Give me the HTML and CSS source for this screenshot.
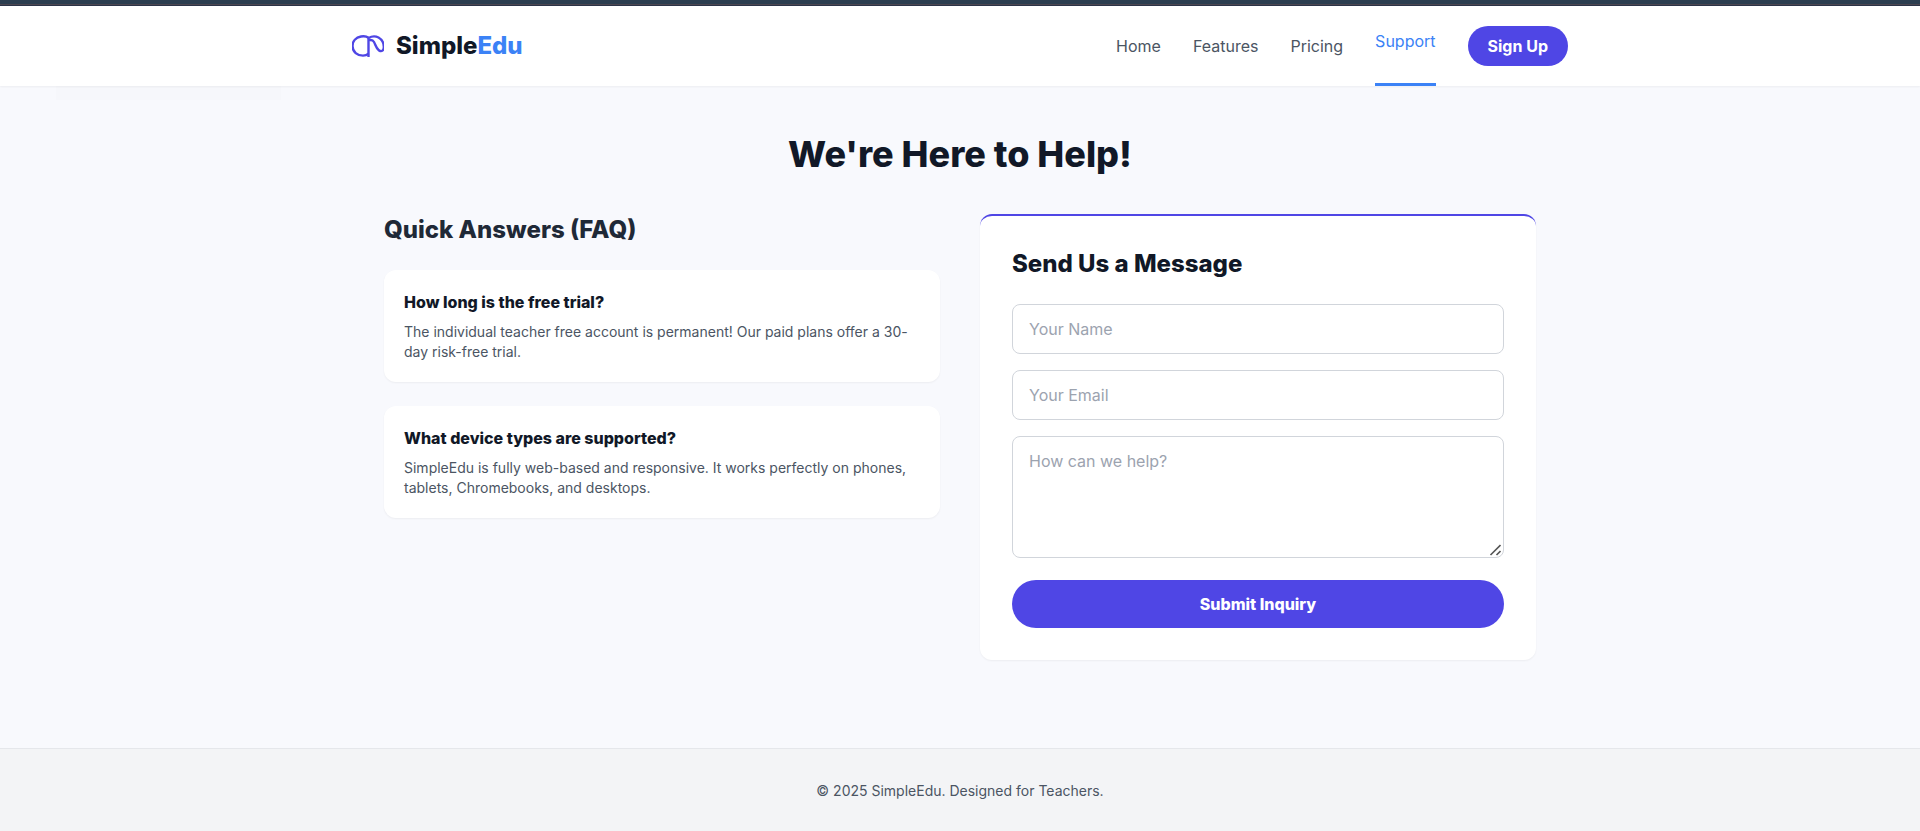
FILE: index.html
```html
<!DOCTYPE html>
<html lang="en">
<head>
<meta charset="utf-8">
<meta name="viewport" content="width=device-width, initial-scale=1">
<title>Support - SimpleEdu</title>
<link rel="stylesheet" href="styles.css">
</head>
<body>
<div class="top-strip"></div>
<header class="site-header">
  <div class="header-inner">
    <a class="brand" href="#">
      <svg class="brand-mark" viewBox="0 0 32 32" fill="none" stroke="currentColor" stroke-width="2.4" stroke-linecap="butt" stroke-linejoin="round" aria-hidden="true">
        <path d="M16.500 7.800C14.500 6.300 11.500 6 9 6.500C4 7.400 0.500 11 0.500 16C0.500 22 5.500 25.600 11 25.600C13 25.600 15 25 16.500 23.800"/>
        <path d="M16.500 27V8C19.500 6.300 23.500 6 26.500 7.500C30 9.500 32 13 31.800 17.500C31.500 21 29.500 21.900 27 20.400C24 18.300 23.500 14.500 22 12C20.800 10 18.500 9.800 16.500 10.600"/>
      </svg>
      <span class="brand-name">Simple<span class="brand-accent">Edu</span></span>
    </a>
    <nav class="nav" aria-label="Main">
      <a class="nav-link" href="#">Home</a>
      <a class="nav-link" href="#">Features</a>
      <a class="nav-link" href="#">Pricing</a>
      <a class="nav-link nav-link-active" href="#" aria-current="page">Support</a>
      <a class="sign-up" href="#">Sign Up</a>
    </nav>
  </div>
  <div class="header-tab"></div>
</header>
<main class="main">
  <h1 class="page-title">We're Here to Help!</h1>
  <div class="columns">
    <section class="faq">
      <h2 class="section-title faq-title">Quick Answers (FAQ)</h2>
      <div class="faq-list">
        <article class="card faq-card">
          <h3 class="faq-question">How long is the free trial?</h3>
          <p class="faq-answer">The individual teacher free account is permanent! Our paid plans offer a 30-day risk-free trial.</p>
        </article>
        <article class="card faq-card">
          <h3 class="faq-question">What device types are supported?</h3>
          <p class="faq-answer">SimpleEdu is fully web-based and responsive. It works perfectly on phones, tablets, Chromebooks, and desktops.</p>
        </article>
      </div>
    </section>
    <section class="card contact">
      <h2 class="section-title">Send Us a Message</h2>
      <form class="form">
        <input class="field" type="text" placeholder="Your Name" aria-label="Your Name">
        <input class="field" type="email" placeholder="Your Email" aria-label="Your Email">
        <div class="area-wrap">
          <textarea class="field field-area" rows="4" placeholder="How can we help?" aria-label="How can we help?"></textarea>
          <svg class="grip" viewBox="0 0 12 12" fill="none" stroke="#555" stroke-width="1.6" aria-hidden="true"><path d="M1.500 11L11.500 1M7.500 11L11.500 7"/></svg>
        </div>
        <button class="submit" type="submit">Submit Inquiry</button>
      </form>
    </section>
  </div>
</main>
<footer class="footer">
  <p class="footer-text">© 2025 SimpleEdu. Designed for Teachers.</p>
</footer>
</body>
</html>
```

FILE: styles.css
```css
*,
*::before,
*::after {
  box-sizing: border-box;
}

body {
  margin: 0;
  background: #f8f9fd;
  color: #1f2937;
  font-family: Inter, "Liberation Sans", sans-serif;
  font-size: 16px;
  line-height: 24px;
}

h1,
h2,
h3,
p {
  margin: 0;
}

a {
  color: inherit;
  text-decoration: none;
}

.top-strip {
  height: 6px;
  background: linear-gradient(#2c3e50 4px, #4b4650 4px, #4b4650 5px, #2b3347 5px);
}

.site-header {
  position: relative;
  background: #fff;
  box-shadow: 0 1px 2px rgba(0, 0, 0, 0.05);
}

.header-tab {
  position: absolute;
  top: 100%;
  left: 56px;
  width: 225px;
  height: 14px;
  background: rgba(0, 0, 0, 0.008);
}

.header-inner {
  display: flex;
  justify-content: space-between;
  align-items: center;
  max-width: 1280px;
  height: 80px;
  margin: 0 auto;
  padding: 0 32px;
}

.brand {
  display: flex;
  align-items: center;
  gap: 12px;
}

.brand-mark {
  width: 32px;
  height: 32px;
  overflow: hidden;
  color: #4f46e5;
}

.brand-name {
  color: #111827;
  font-size: 24px;
  font-weight: 800;
  line-height: 32px;
}

.brand-accent {
  color: #3b82f6;
}

.nav {
  display: flex;
  align-self: stretch;
  align-items: center;
  gap: 32px;
}

.nav-link {
  color: #4b5563;
}

.nav-link-active {
  align-self: stretch;
  padding-top: 23px;
  border-bottom: 3px solid #3b82f6;
  color: #3b82f6;
}

.sign-up {
  padding: 8px 20px;
  border-radius: 20px;
  background: #4f46e5;
  color: #fff;
  font-weight: 700;
}

.main {
  max-width: 1216px;
  margin: 0 auto;
  padding: 48px 32px 88px;
}

.page-title {
  margin-bottom: 40px;
  color: #111827;
  font-size: 36px;
  font-weight: 800;
  line-height: 40px;
  text-align: center;
}

.columns {
  display: grid;
  grid-template-columns: 1fr 1fr;
  align-items: start;
  gap: 40px;
}

.section-title {
  margin-bottom: 24px;
  color: #111827;
  font-size: 24px;
  font-weight: 800;
  line-height: 32px;
}

.faq-title {
  color: #1f2937;
}

.card {
  border-radius: 12px;
  background: #fff;
  box-shadow: 0 1px 2px rgba(0, 0, 0, 0.05);
}

.faq-list {
  display: grid;
  gap: 24px;
}

.faq-card {
  padding: 20px;
}

.faq-question {
  margin-bottom: 8px;
  color: #111827;
  font-size: 16px;
  font-weight: 800;
  line-height: 24px;
}

.faq-answer {
  color: #4b5563;
  font-size: 14px;
  line-height: 20px;
}

.contact {
  padding: 32px;
  border-top: 2px solid #4f46e5;
}

.form {
  display: flex;
  flex-direction: column;
  gap: 16px;
}

.field {
  width: 100%;
  margin: 0;
  padding: 12px 16px;
  border: 1px solid #d1d5db;
  border-radius: 8px;
  background: #fff;
  color: #1f2937;
  font: inherit;
}

input.field {
  height: 50px;
}

.field::placeholder {
  color: #9ca3af;
}

.area-wrap {
  position: relative;
  margin-bottom: 6px;
}

.field-area {
  display: block;
  resize: vertical;
}

.field-area::-webkit-resizer {
  background: transparent;
}

.grip {
  position: absolute;
  right: 3px;
  bottom: 2px;
  width: 12px;
  height: 12px;
  pointer-events: none;
}

.submit {
  padding: 12px 16px;
  border: 0;
  border-radius: 24px;
  background: #4f46e5;
  color: #fff;
  font: inherit;
  font-weight: 800;
}

.footer {
  padding: 32px 32px 30px;
  border-top: 1px solid #e5e7eb;
  background: #f3f4f6;
  text-align: center;
}

.footer-text {
  color: #4b5563;
  font-size: 14px;
  line-height: 20px;
}

@media (max-width: 800px) {
  .columns {
    grid-template-columns: 1fr;
  }
}
```
